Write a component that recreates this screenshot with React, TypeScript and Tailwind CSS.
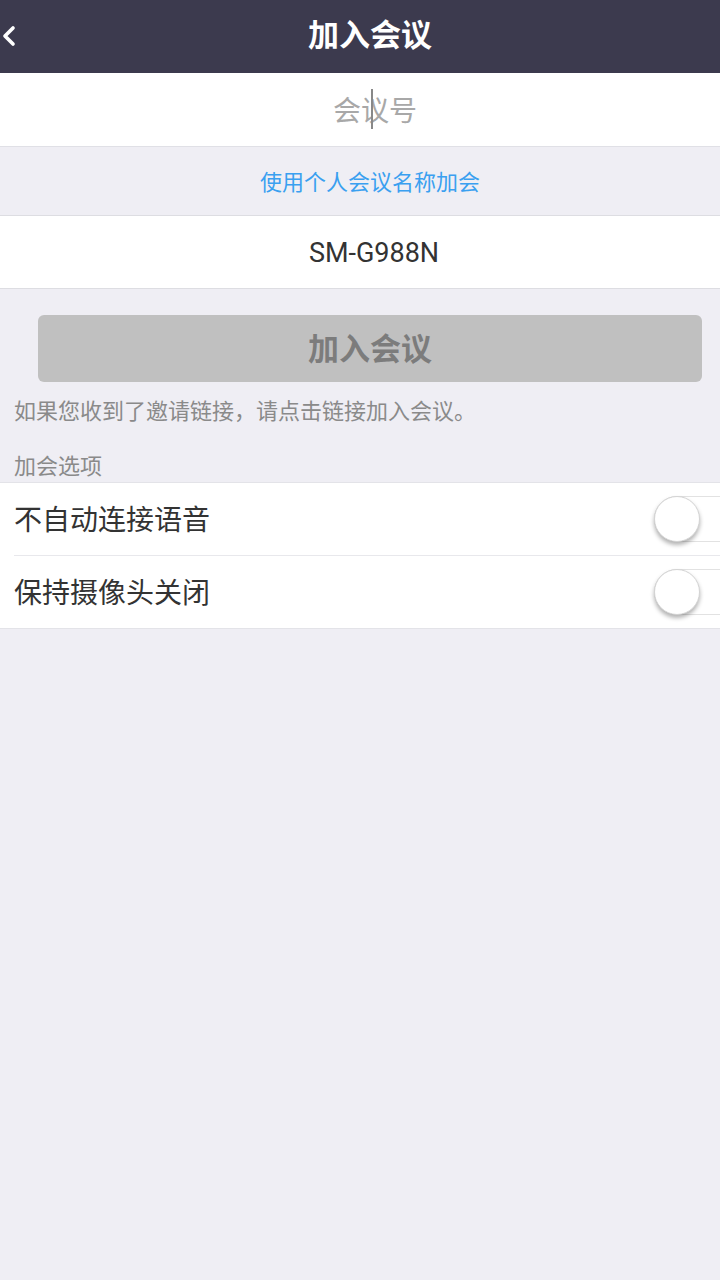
import { ChevronLeft } from 'lucide-react';

const Toggle = () => (
  <div className="relative -mr-[26px] h-[46px] w-[92px] shrink-0 rounded-full border border-[#e2e2e2] bg-white">
    <div className="absolute -left-px -top-px h-[46px] w-[46px] rounded-full border border-[#d4d4d4] bg-white shadow-[0_3px_4px_rgba(0,0,0,0.3)]" />
  </div>
);

const App = () => {
  const font = { fontFamily: 'Roboto, "Noto Sans CJK SC", sans-serif' };

  return (
    <main style={font} className="flex min-h-[1280px] w-[720px] flex-col bg-[#efeef4]">
      {/* header */}
      <header className="relative flex h-[73px] items-center justify-center bg-[#3c3a4e] pl-[20px]">
        <ChevronLeft className="absolute -left-[7px] top-[20px] h-[32px] w-[32px] text-white" strokeWidth={2.75} />
        <h1 className="text-[31px] font-bold text-white">加入会议</h1>
      </header>

      <div className="flex h-[74px] items-center justify-center border-b border-[#e0e0e6] bg-white pl-[30px] pt-[5px]">
        <span className="relative text-[28px] text-[#a8a8a8]">
          会议号
          <span className="absolute left-[38px] top-[-2px] h-[40px] w-[2px] bg-[#888]" />
        </span>
      </div>

      <div className="flex h-[68px] items-center justify-center pl-[20px] pt-[3px]">
        <span className="text-[22px] text-[#3aa0f0]">使用个人会议名称加会</span>
      </div>

      <div className="flex h-[74px] items-center justify-center border-y border-[#dddde2] bg-white pl-[28px] pt-[3px]">
        <span className="text-[27px] text-[#333]">SM-G988N</span>
      </div>

      <div className="px-[38px] pt-[26px] pr-[18px]">
        <button className="flex h-[67px] w-full items-center justify-center rounded-[6px] bg-[#c0c0c0] pt-[4px] text-[31px] font-bold text-[#7c7c7c]">
          加入会议
        </button>
      </div>

      <p className="mt-[17px] px-[14px] text-[22px] leading-[26px] text-[#8a8a8a]">
        如果您收到了邀请链接，请点击链接加入会议。
      </p>

      <p className="mt-[29px] px-[14px] text-[22px] leading-[26px] text-[#8a8a8a]">加会选项</p>

      <div className="mt-[2px] overflow-hidden border-y border-[#e3e3e8] bg-white">
        <div className="flex h-[72px] items-center justify-between pl-[14px]">
          <span className="pt-[3px] text-[28px] text-[#333]">不自动连接语音</span>
          <Toggle />
        </div>
        <div className="ml-[14px] h-px bg-[#e8e8ec]" />
        <div className="flex h-[72px] items-center justify-between pl-[14px]">
          <span className="pt-[3px] text-[28px] text-[#333]">保持摄像头关闭</span>
          <Toggle />
        </div>
      </div>
    </main>
  );
};

export default App;
